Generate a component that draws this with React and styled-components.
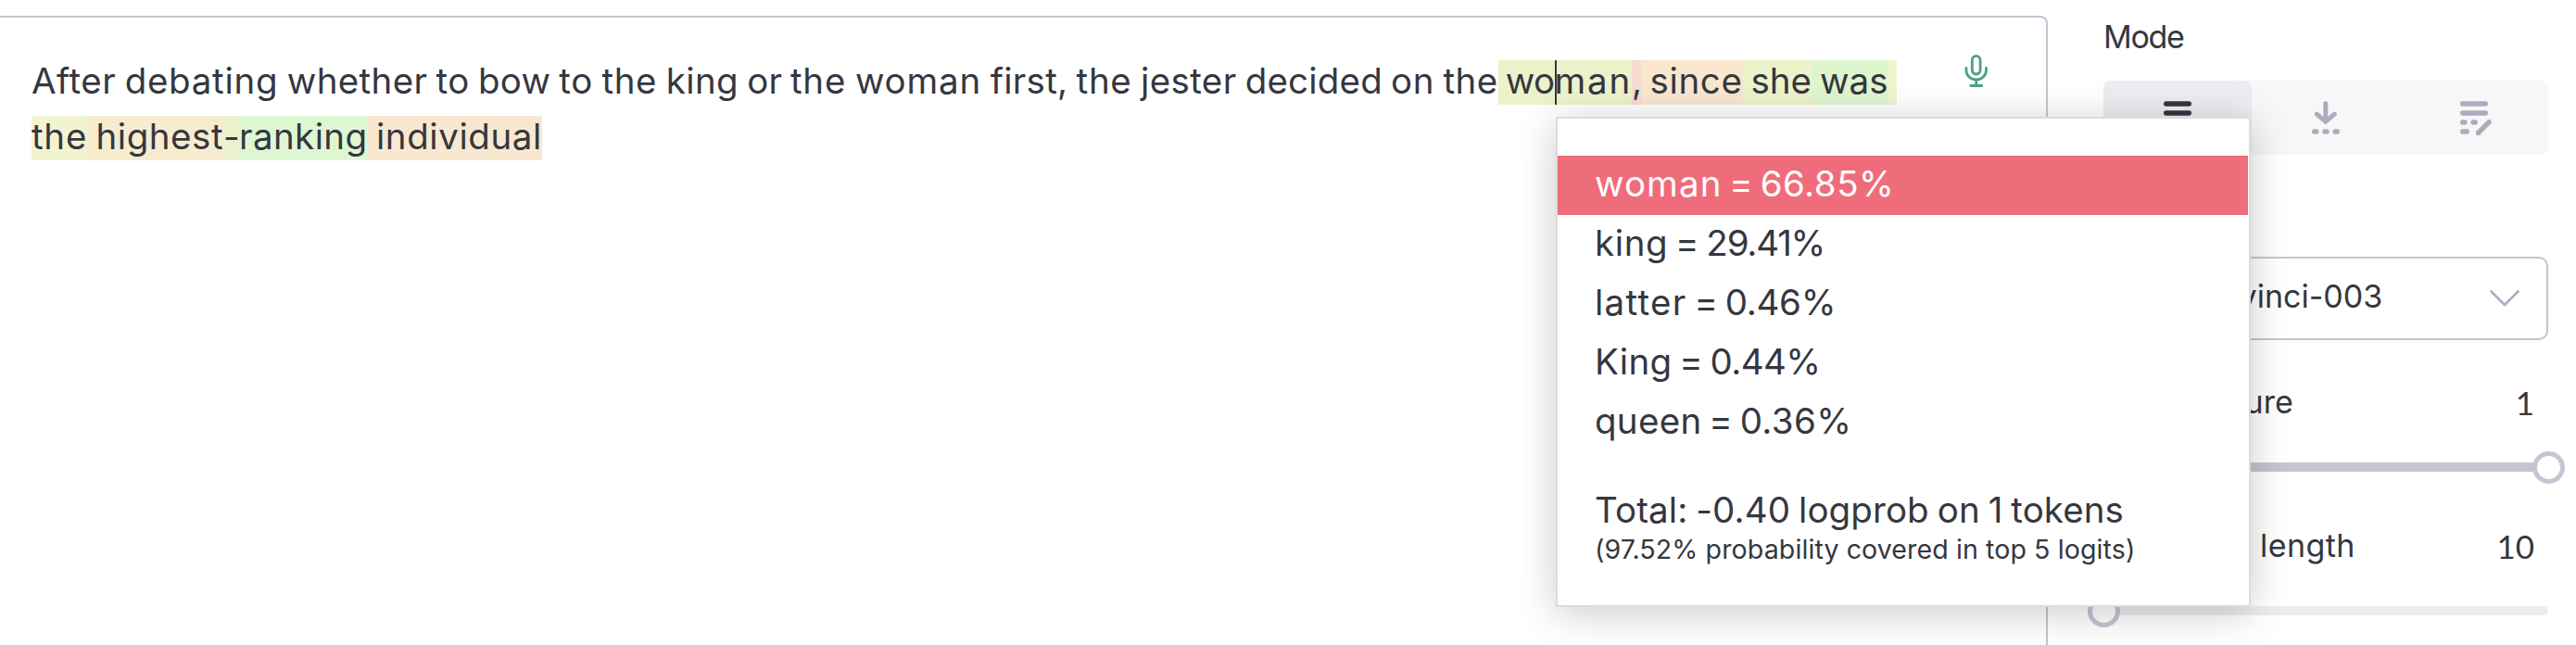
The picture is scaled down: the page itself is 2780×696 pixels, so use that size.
import React from 'react';
import styled, { createGlobalStyle } from 'styled-components';

const GlobalStyle = createGlobalStyle`
  * {
    box-sizing: border-box;
  }

  body {
    margin: 0;
    background: #fff;
    color: #353740;
    font-family: Inter, 'Liberation Sans', sans-serif;
  }
`;

const Page = styled.div`
  position: relative;
  display: flex;
  align-items: flex-start;
  width: 2780px;
  height: 696px;
  overflow: hidden;
`;

const Editor = styled.div`
  display: flex;
  justify-content: space-between;
  align-items: flex-start;
  width: 2210px;
  height: 720px;
  margin-top: 17px;
  padding: 40px 62px 0 34px;
  border-top: 2px solid #c5c5d2;
  border-right: 2px solid #c5c5d2;
  border-top-right-radius: 8px;
`;

const Line = styled.div`
  display: flex;
  align-items: center;
  height: 60px;
  font-size: 38.5px;
  white-space: pre;
  word-spacing: -2px;
`;

const Token = styled.span`
  height: 48px;
  line-height: 44px;
  letter-spacing: ${({ $track }) => $track || 0}px;
  background: ${({ $bg }) => $bg || 'transparent'};
`;

const Caret = styled.span`
  z-index: 1;
  width: 2px;
  height: 48px;
  margin-right: -2px;
  background: #353740;
`;

const MicButton = styled.svg`
  width: 26px;
  height: 36px;
  fill: none;
  stroke: #4aa181;
  stroke-width: 2.8;
  stroke-linecap: round;
`;

const Sidebar = styled.div`
  width: 480px;
  margin-left: 60px;
  padding-top: 20px;
  font-size: 34px;
`;

const Label = styled.div`
  height: 40px;
  line-height: 40px;
  margin-bottom: 27px;
  letter-spacing: -1.3px;
`;

const Segments = styled.div`
  display: flex;
  height: 80px;
  margin-bottom: 43px;
  border-radius: 8px;
  background: #f7f7f8;
`;

const Segment = styled.div`
  display: flex;
  flex: 1;
  align-items: center;
  justify-content: center;
  border-radius: 8px;
  color: ${({ $active }) => ($active ? '#353740' : '#acacbe')};
  background: ${({ $active }) => ($active ? '#ececf1' : 'transparent')};
`;

const ModeIcon = styled.svg`
  width: 36px;
  height: 36px;
  overflow: visible;
  fill: none;
  stroke: currentColor;
  stroke-width: 5.4;
  stroke-linecap: round;
`;

const Select = styled.div`
  display: flex;
  align-items: center;
  justify-content: space-between;
  height: 90px;
  padding: 0 29px 5px 30px;
  border: 2px solid #c5c5d2;
  border-radius: 10px;
`;

const Chevron = styled.svg`
  width: 32px;
  height: 18px;
  margin-top: 5px;
  fill: none;
  stroke: #acacbe;
  stroke-width: 2.6;
  stroke-linecap: round;
  stroke-linejoin: round;
`;

const Field = styled.div`
  display: flex;
  justify-content: space-between;
  height: 40px;
  line-height: 40px;
  margin: 47px 0 33px;
  letter-spacing: ${({ $track }) => $track || 0}px;
`;

const FieldValue = styled.span`
  padding-right: 15px;
  font-family: Lato, Inter, sans-serif;
  font-size: 35px;
  letter-spacing: 0;
`;

const Slider = styled.div`
  position: relative;
  height: 35px;
  padding-top: 12px;
`;

const Track = styled.div`
  height: 10px;
  border-radius: 5px;
  background: #ececf1;
`;

const Fill = styled.div`
  height: 10px;
  border-radius: 5px;
  background: #c5c5d2;
`;

const Thumb = styled.div`
  position: absolute;
  top: 0;
  width: 35px;
  height: 35px;
  margin-left: -17.5px;
  border: 5px solid #c5c5d2;
  border-radius: 50%;
  background: #fff;
`;

const Popup = styled.div`
  position: absolute;
  top: 126px;
  left: 1679px;
  width: 750px;
  height: 529px;
  padding: 40px 1px 0 0;
  border: 2px solid #dcdcdc;
  background: #fff;
  box-shadow: 0 6px 40px rgba(0, 0, 0, 0.21);
  font-size: 38.5px;
  white-space: pre;
`;

const Option = styled.div`
  height: 64px;
  padding-left: 40px;
  line-height: 60px;
  word-spacing: -3px;
  color: ${({ $selected }) => ($selected ? '#fff' : 'inherit')};
  background: ${({ $selected }) => ($selected ? '#ef6c7a' : 'transparent')};
`;

const Tracked = styled.span`
  letter-spacing: ${({ $track }) => $track}px;
`;

const Total = styled.div`
  padding: 38px 0 0 40px;
  line-height: 48px;
  letter-spacing: 0.1px;
  word-spacing: -2px;
`;

const Coverage = styled.div`
  padding-left: 40px;
  font-size: 28.6px;
  line-height: 37px;
  letter-spacing: 0.08px;
`;

// [text, letter spacing, background]
const prompt = [
  ['After ', 0.53],
  ['debating ', 0.71],
  ['whether ', 0.37],
  ['to ', 0.44],
  ['bow ', 0.23],
  ['to ', 0.67],
  ['the ', 0.65],
  ['king ', 0.4],
  ['or ', 0.07],
  ['the ', 0.85],
  ['woman ', 0.81],
  ['first, ', 0.29],
  ['the ', 0.7],
  ['jester ', 0.37],
  ['decided ', 0.18],
  ['on ', 0.67],
  ['the', 0.4],
  [' wo', -0.6, '#ecf2c9'],
];

const completion = [
  ['man', 1.8, '#ecf2c9'],
  [',', -1, '#f6dcd0'],
  [' since', 0.63, '#f8e7cd'],
  [' she', 0.03, '#ecf2c9'],
  [' was', 0.05, '#dff5ce'],
  [' ', 0.8, '#f2f3cf'],
];

const secondLine = [
  ['the', 0.77, '#f2f4d0'],
  [' highest', 0.53, '#f7ecce'],
  ['-', -0.7, '#ecf2cd'],
  ['ranking', 0.4, '#ddf7d3'],
  [' individual', 0.58, '#f8e8cf'],
];

const options = [
  { word: 'woman', percent: '66.85%', wordTrack: 1.1, percentTrack: 0.5 },
  { word: 'king', percent: '29.41%', wordTrack: 0.6, percentTrack: -1.2 },
  { word: 'latter', percent: '0.46%', wordTrack: 1.3, percentTrack: -0.3 },
  { word: 'King', percent: '0.44%', wordTrack: 0.3, percentTrack: -0.6 },
  { word: 'queen', percent: '0.36%', wordTrack: 0.3, percentTrack: 0.4 },
];

const renderTokens = (tokens) =>
  tokens.map(([text, track, bg], i) => (
    <Token key={i} $track={track} $bg={bg}>
      {text}
    </Token>
  ));

function RangeSlider({ value }) {
  return (
    <Slider>
      <Track>
        <Fill style={{ width: `${value}%` }} />
      </Track>
      <Thumb style={{ left: `${value}%` }} />
    </Slider>
  );
}

function App() {
  return (
    <>
      <GlobalStyle />
      <Page>
        <Editor>
          <div>
            <Line>
              {renderTokens(prompt)}
              <Caret />
              {renderTokens(completion)}
            </Line>
            <Line>{renderTokens(secondLine)}</Line>
          </div>
          <MicButton viewBox="0 0 26 36">
            <rect x="8.3" y="1.4" width="8.8" height="19.6" rx="4.4" />
            <path d="M1.9 14.5v2.2a10.8 10.3 0 0 0 21.6 0v-2.2M12.7 27v6.5M6.8 33.5h11.8" />
          </MicButton>
        </Editor>
        <Sidebar>
          <Label>Mode</Label>
          <Segments>
            <Segment $active>
              <ModeIcon viewBox="0 0 36 36">
                <path d="M5.7 3h24.6M5.7 13h24.6M5.7 23h24.6M5.7 33h24.6" />
              </ModeIcon>
            </Segment>
            <Segment>
              <ModeIcon viewBox="0 0 36 36">
                <path d="M17.8 2.7v19M8.2 14.2l9.6 8 9.6-8" strokeWidth="5" />
                <path d="M5.7 33h2.2M17 33h2M28.1 33h2.2" />
              </ModeIcon>
            </Segment>
            <Segment>
              <ModeIcon viewBox="0 0 36 36">
                <path d="M5.7 3h24.6M5.7 13h24.6M5.7 23h2.2M17 23h2.2M5.7 33h4.5" />
                <path d="M34 22.8L22.8 34.2" />
                <path d="M20.8 32.6v3.8h3.8" strokeWidth="1" fill="currentColor" />
              </ModeIcon>
            </Segment>
          </Segments>
          <Label>Model</Label>
          <Select>
            text-davinci-003
            <Chevron viewBox="0 0 32 18">
              <path d="M1.5 1.5L16 16 30.5 1.5" />
            </Chevron>
          </Select>
          <Field>
            Temperature
            <FieldValue>1</FieldValue>
          </Field>
          <RangeSlider value={100} />
          <Field $track={0.4}>
            Maximum length
            <FieldValue>10</FieldValue>
          </Field>
          <RangeSlider value={0} />
        </Sidebar>
        <Popup>
          {options.map(({ word, percent, wordTrack, percentTrack }, i) => (
            <Option key={word} $selected={i === 0}>
              <Tracked $track={wordTrack}>{word}</Tracked>
              {' = '}
              <Tracked $track={percentTrack}>{percent}</Tracked>
            </Option>
          ))}
          <Total>Total: -0.40 logprob on 1 tokens</Total>
          <Coverage>(97.52% probability covered in top 5 logits)</Coverage>
        </Popup>
      </Page>
    </>
  );
}

export default App;
